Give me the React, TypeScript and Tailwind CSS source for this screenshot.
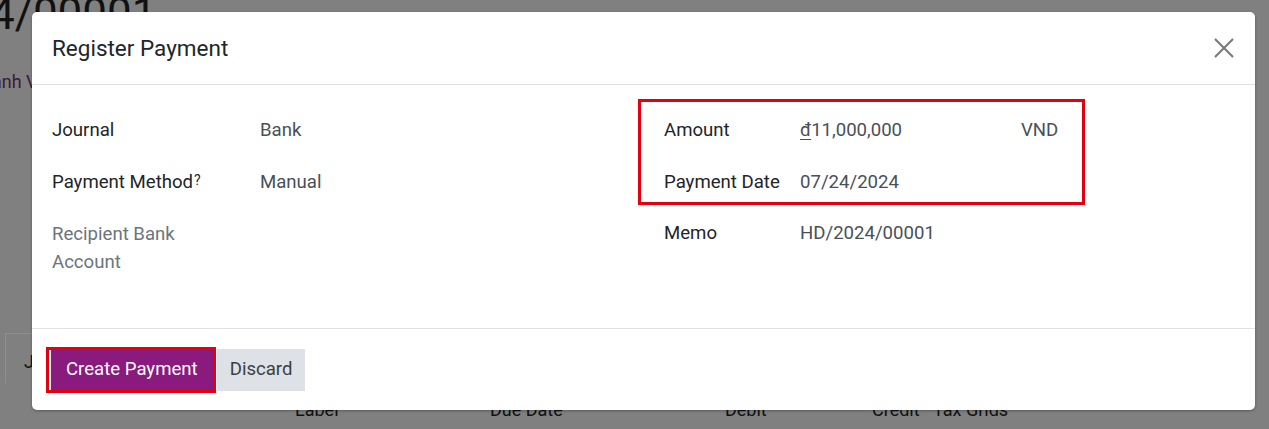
import React from "react";

function Row({ label, value, labelClass = "text-[#212529]", sup }: { label: React.ReactNode; value?: React.ReactNode; labelClass?: string; sup?: boolean }) {
  return (
    <div className="flex">
      <div className={`w-[208px] shrink-0 leading-[28px] ${labelClass}`}>
        {label}
        {sup && <sup className="text-[14px] ml-[1px] relative -top-[3px]">?</sup>}
      </div>
      <div className="leading-[28px] text-[#495057]">{value}</div>
    </div>
  );
}

export default function App() {
  return (
    <div
      className="relative w-[1269px] h-[429px] overflow-hidden bg-[#808080] text-[18.6px]"
      style={{ fontFamily: "Roboto, 'Liberation Sans', sans-serif" }}
    >
      {/* page behind the dim overlay */}
      <div className="absolute -left-[10px] -top-[8px] text-[44px] text-[#111] leading-none">4/00001</div>
      <div className="absolute -left-[8px] top-[68px] text-[18px] text-[#3a1a36]">anh V</div>
      <div className="absolute left-[5px] top-[333px] w-[60px] h-[50px] border border-[#8f8f8f] border-b-0 text-[#111] pl-[18px] pt-[14px] text-[18px]">J</div>
      <div className="absolute left-[295px] top-[396px] flex text-[18px] text-[#111]">
        <span className="w-[195px]">Label</span>
        <span className="w-[235px]">Due Date</span>
        <span className="w-[147px]">Debit</span>
        <span>Credit&nbsp;&nbsp;&nbsp;Tax Grids</span>
      </div>

      {/* modal */}
      <div className="absolute left-[32px] top-[12px] w-[1223px] h-[398px] bg-white rounded-[5px] flex flex-col shadow-[0_1px_3px_rgba(0,0,0,0.3)]">
        <div className="h-[73px] shrink-0 flex items-center justify-between pl-[20px] pr-[20px] border-b border-[#dee2e6]">
          <h4 className="text-[22.5px] text-[#212529] pt-[1px]">Register Payment</h4>
          <svg width="22" height="22" viewBox="0 0 22 22">
            <path d="M2 2 L20 20 M20 2 L2 20" stroke="#777" strokeWidth="2" />
          </svg>
        </div>

        <div className="flex-1 flex pt-[31px] pl-[20px]">
          <div className="w-[586px] flex flex-col gap-[24px]">
            <Row label="Journal" value="Bank" />
            <Row label="Payment Method" value="Manual" sup />
            <Row label={<>Recipient Bank<br />Account</>} labelClass="text-[#6c757d]" />
          </div>
          <div className="relative flex flex-col pl-[26px]">
            <div className="absolute left-0 -top-[17px] w-[447px] h-[106px] border-[3px] border-[#e3000f]" />
            <div className="flex">
              <div className="w-[136px] leading-[28px] text-[#212529]">Amount</div>
              <div className="w-[221px] leading-[28px] text-[#495057]">
                <span className="underline underline-offset-[3px] decoration-1">đ</span>11,000,000
              </div>
              <div className="leading-[28px] text-[#495057]">VND</div>
            </div>
            <div className="flex mt-[24px]">
              <div className="w-[136px] leading-[28px] text-[#212529]">Payment Date</div>
              <div className="leading-[28px] text-[#495057]">07/24/2024</div>
            </div>
            <div className="flex mt-[23px]">
              <div className="w-[136px] leading-[28px] text-[#212529]">Memo</div>
              <div className="leading-[28px] text-[#495057]">HD/2024/00001</div>
            </div>
          </div>
        </div>

        <div className="h-[82px] shrink-0 border-t border-[#dee2e6] flex items-start pt-[18px] pl-[14px]">
          <div className="border-[3px] border-[#e3000f] pl-[2px] bg-white">
            <button className="h-[40px] px-[15px] bg-[#8a1a7e] text-white text-[18.6px]">Create Payment</button>
          </div>
          <button className="ml-[1px] mt-[2px] h-[42px] px-[13px] bg-[#dee2e6] text-[#3b3f43] text-[18.6px]">Discard</button>
        </div>
      </div>
    </div>
  );
}
